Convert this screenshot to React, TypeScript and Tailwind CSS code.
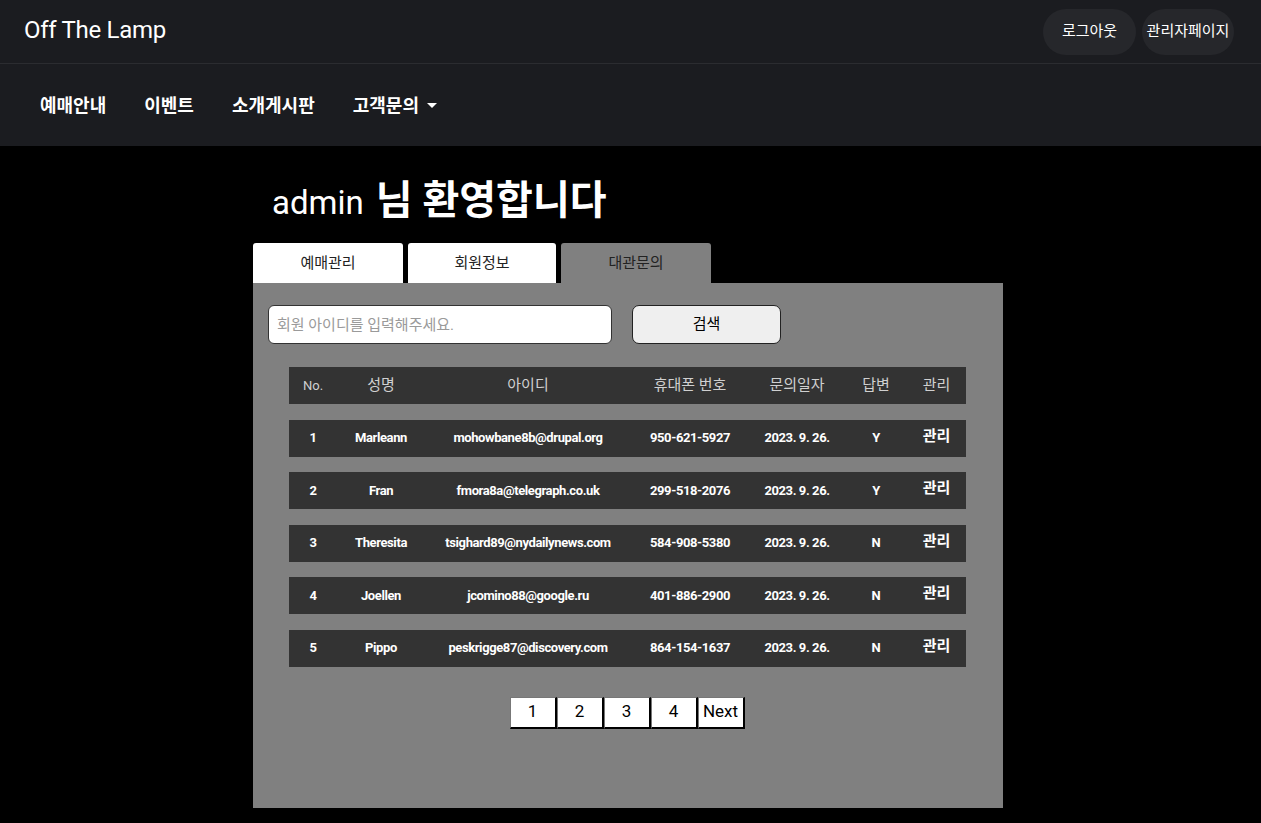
import React from "react";

const rows = [
  { no: 1, name: "Marleann", id: "mohowbane8b@drupal.org", phone: "950-621-5927", date: "2023. 9. 26.", ans: "Y" },
  { no: 2, name: "Fran", id: "fmora8a@telegraph.co.uk", phone: "299-518-2076", date: "2023. 9. 26.", ans: "Y" },
  { no: 3, name: "Theresita", id: "tsighard89@nydailynews.com", phone: "584-908-5380", date: "2023. 9. 26.", ans: "N" },
  { no: 4, name: "Joellen", id: "jcomino88@google.ru", phone: "401-886-2900", date: "2023. 9. 26.", ans: "N" },
  { no: 5, name: "Pippo", id: "peskrigge87@discovery.com", phone: "864-154-1637", date: "2023. 9. 26.", ans: "N" },
];

const cols = "grid grid-cols-[48px_88px_206px_118px_96px_62px_59px] items-center text-center";
const font = "font-['Roboto','Noto_Sans_CJK_KR',sans-serif]";

const App = () => {
  return (
    <div className={`min-h-[823px] bg-black text-white ${font}`}>
      {/* top bar */}
      <header className="bg-[#1b1c20]">
        <div className="h-16 flex items-center justify-between pl-6 pr-[27px] border-b border-[#2b2c30]">
          <h1 className="text-[24px] font-normal tracking-[-0.3px] -mt-1">Off The Lamp</h1>
          <div className="flex items-center gap-[6px] text-[15px]">
            <button className="h-[46px] w-[93px] rounded-full bg-[#26272b]">로그아웃</button>
            <button className="h-[46px] w-[92px] rounded-full bg-[#26272b]">관리자페이지</button>
          </div>
        </div>
        <nav className="h-[82px] flex items-center pl-10 gap-[38px] text-[18px] font-bold">
          <a>예매안내</a>
          <a>이벤트</a>
          <a>소개게시판</a>
          <a className="flex items-center gap-[8px]">
            고객문의
            <span className="w-0 h-0 border-x-[5px] border-x-transparent border-t-[5px] border-t-white" />
          </a>
        </nav>
      </header>

      <main className="w-[750px] ml-[253px]">
        <h2 className="pt-[30px] pl-[19px] h-[97px] leading-[50px] flex items-baseline gap-[12px]">
          <span className="font-normal text-[33px]">admin</span>
          <span className="font-bold text-[40px]">님 환영합니다</span>
        </h2>

        <div className="flex gap-[5px] text-[15px] text-[#222]">
          <button className="w-[150px] h-[40px] bg-white rounded-t-[3px]">예매관리</button>
          <button className="w-[148px] h-[40px] bg-white rounded-t-[3px]">회원정보</button>
          <button className="w-[150px] h-[40px] bg-[#808080] rounded-t-[3px]">대관문의</button>
        </div>

        <section className="bg-[#808080] h-[525px] pt-[22px]">
          <div className="flex items-center pl-[15px] gap-5">
            <input
              placeholder="회원 아이디를 입력해주세요."
              className="w-[344px] h-[39px] bg-white rounded-[6px] border border-[#333] px-2 text-[15px] text-black placeholder:text-[#9a9a9a] outline-none"
            />
            <button className="w-[149px] h-[39px] bg-[#efefef] rounded-[7px] border border-[#222] text-[15px] text-black">
              검색
            </button>
          </div>

          <div className="ml-9 mt-[23px] w-[677px] flex flex-col gap-[15.5px]">
            <div className={`${cols} h-[37px] bg-[#333] text-[#d0d0d0] text-[15px]`}>
              <span className="text-[13px]">No.</span>
              <span>성명</span>
              <span>아이디</span>
              <span>휴대폰 번호</span>
              <span>문의일자</span>
              <span>답변</span>
              <span>관리</span>
            </div>
            {rows.map((r) => (
              <div key={r.no} className={`${cols} h-[37px] bg-[#333] text-[13px] font-bold tracking-[-0.4px]`}>
                <span>{r.no}</span>
                <span>{r.name}</span>
                <span>{r.id}</span>
                <span>{r.phone}</span>
                <span>{r.date}</span>
                <span>{r.ans}</span>
                <span className="text-[15px] tracking-normal -mt-1">관리</span>
              </div>
            ))}
          </div>

          <div className="flex justify-center mt-[30px] pr-[2px]">
            {["1", "2", "3", "4", "Next"].map((p) => (
              <button
                key={p}
                className="w-[47px] h-[32px] bg-white text-black text-[17px] border-l border-t border-l-[#777] border-t-[#777] border-r-2 border-b-2 border-r-black border-b-black"
              >
                {p}
              </button>
            ))}
          </div>
        </section>
      </main>
    </div>
  );
};

export default App;
